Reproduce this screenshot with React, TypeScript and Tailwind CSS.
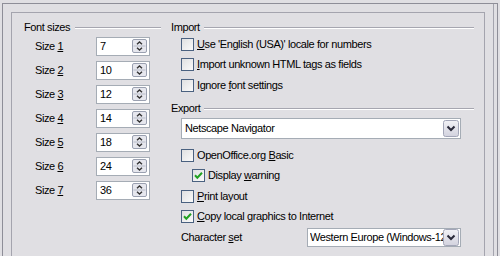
import React from "react";

const F = "font-['Liberation_Sans',Arial,sans-serif] text-[11px] tracking-[-0.4px] text-black leading-[13px]";

function U({ children }: { children: React.ReactNode }) {
  return <span className="underline underline-offset-[1px]">{children}</span>;
}

function Spin() {
  return (
    <svg width="15" height="14" viewBox="0 0 15 14" className="shrink-0">
      <rect x="0.5" y="0.5" width="14" height="13" rx="1.5" fill="#e6e7ee" stroke="#9aa0b0" />
      <line x1="1.5" y1="7" x2="13.5" y2="7" stroke="#b8bcc8" />
      <path d="M5 5.2 L7.5 3 L10 5.2" stroke="#333" strokeWidth="1.4" fill="none" />
      <path d="M5 8.8 L7.5 11 L10 8.8" stroke="#333" strokeWidth="1.4" fill="none" />
    </svg>
  );
}

function DropBtn() {
  return (
    <svg width="16" height="17" viewBox="0 0 16 17" className="shrink-0">
      <defs>
        <linearGradient id="dbg" x1="0" y1="0" x2="0" y2="1">
          <stop offset="0" stopColor="#f2f2f6" />
          <stop offset="1" stopColor="#d2d2de" />
        </linearGradient>
      </defs>
      <rect x="0.5" y="0.5" width="15" height="16" rx="2" fill="url(#dbg)" stroke="#a3a6b8" />
      <path d="M4.5 6.5 L8 10 L11.5 6.5" stroke="#2a2a3a" strokeWidth="2" fill="none" />
    </svg>
  );
}

function Check({ checked }: { checked?: boolean }) {
  return (
    <svg width="13" height="13" viewBox="0 0 13 13" className="shrink-0">
      <defs>
        <linearGradient id="cbg" x1="0" y1="0" x2="1" y2="1">
          <stop offset="0" stopColor="#dedfe0" />
          <stop offset="1" stopColor="#fbfbfb" />
        </linearGradient>
      </defs>
      <rect x="0.5" y="0.5" width="12" height="12" fill="url(#cbg)" stroke="#4a6180" />
      {checked && (
        <path d="M3 6.3 L5.3 8.7 L10 3.8" stroke="#21a121" strokeWidth="2" fill="none" />
      )}
    </svg>
  );
}

function Heading({ label, lineStart }: { label: string; lineStart: string }) {
  return (
    <div className="flex items-center h-[13px]">
      <span className={F}>{label}</span>
      <div className={`flex-1 ${lineStart} flex flex-col`}>
        <div className="h-px bg-[#a6a6b0]" />
        <div className="h-px bg-white" />
      </div>
    </div>
  );
}

function SizeRow({ n, v }: { n: string; v: string }) {
  return (
    <div className="flex items-center h-[24px] pl-[11px]">
      <div className={`w-[61px] ${F}`}>
        Size <U>{n}</U>
      </div>
      <div className="w-[54px] h-[19px] bg-white border border-[#a5acb5] flex items-center pl-[3px] pr-[2px]">
        <span className={`flex-1 ${F}`}>{v}</span>
        <Spin />
      </div>
    </div>
  );
}

function CheckRow({
  checked,
  indent,
  h,
  children,
}: {
  checked?: boolean;
  indent?: boolean;
  h: string;
  children: React.ReactNode;
}) {
  return (
    <div className={`flex items-center ${h} ${indent ? "pl-[21px]" : "pl-[10px]"}`}>
      <Check checked={checked} />
      <span className={`ml-[3px] ${F}`}>{children}</span>
    </div>
  );
}

export default function App() {
  return (
    <div className="w-[500px] h-[256px] bg-[#e0dfe3] overflow-hidden pt-[3px] pl-[2px]">
      <div className="w-[496px] h-[270px] border-l border-t border-r border-[#8e8e98]">
        <div className="w-[491px] h-full border-r border-[#a4a4ae] pl-[8px] pt-[8px]">
          <div className="w-[474px] h-[260px] border border-[#a4a4ae] flex pl-[12px] pt-[8px]">
            <div className="w-[137px] flex flex-col">
              <Heading label="Font sizes" lineStart="ml-[5px]" />
              <SizeRow n="1" v="7" />
              <SizeRow n="2" v="10" />
              <SizeRow n="3" v="12" />
              <SizeRow n="4" v="14" />
              <SizeRow n="5" v="18" />
              <SizeRow n="6" v="24" />
              <SizeRow n="7" v="36" />
            </div>
            <div className="w-[303px] ml-[10px] flex flex-col">
              <Heading label="Import" lineStart="ml-[4px]" />
              <CheckRow h="h-[20px]">
                <U>U</U>se 'English (USA)' locale for numbers
              </CheckRow>
              <CheckRow h="h-[21px]">
                <U>I</U>mport unknown HTML tags as fields
              </CheckRow>
              <CheckRow h="h-[20px]">
                Ignore <U>f</U>ont settings
              </CheckRow>
              <div className="mt-[7px]">
                <Heading label="Export" lineStart="ml-[4px]" />
              </div>
              <div className="mt-[3px] ml-[10px] w-[280px] h-[21px] bg-white border border-[#a5acb5] flex items-center pl-[3px] pr-[1px]">
                <span className={`flex-1 ${F}`}>Netscape Navigator</span>
                <DropBtn />
              </div>
              <div className="mt-[6px]" />
              <CheckRow h="h-[20px]">
                OpenOffice.org <U>B</U>asic
              </CheckRow>
              <CheckRow h="h-[21px]" indent checked>
                Display <U>w</U>arning
              </CheckRow>
              <CheckRow h="h-[20px]">
                <U>P</U>rint layout
              </CheckRow>
              <CheckRow h="h-[21px]" checked>
                <U>C</U>opy local graphics to Internet
              </CheckRow>
              <div className="flex items-center h-[21px] pl-[10px]">
                <span className={`w-[126px] ${F}`}>
                  Character <U>s</U>et
                </span>
                <div className="w-[154px] h-[19px] bg-white border border-[#a5acb5] flex items-center pl-[2px] pr-[1px] overflow-hidden">
                  <span className={`flex-1 whitespace-nowrap overflow-hidden ${F}`}>
                    Western Europe (Windows-1252/WinLatin 1)
                  </span>
                  <DropBtn />
                </div>
              </div>
            </div>
          </div>
        </div>
      </div>
    </div>
  );
}
